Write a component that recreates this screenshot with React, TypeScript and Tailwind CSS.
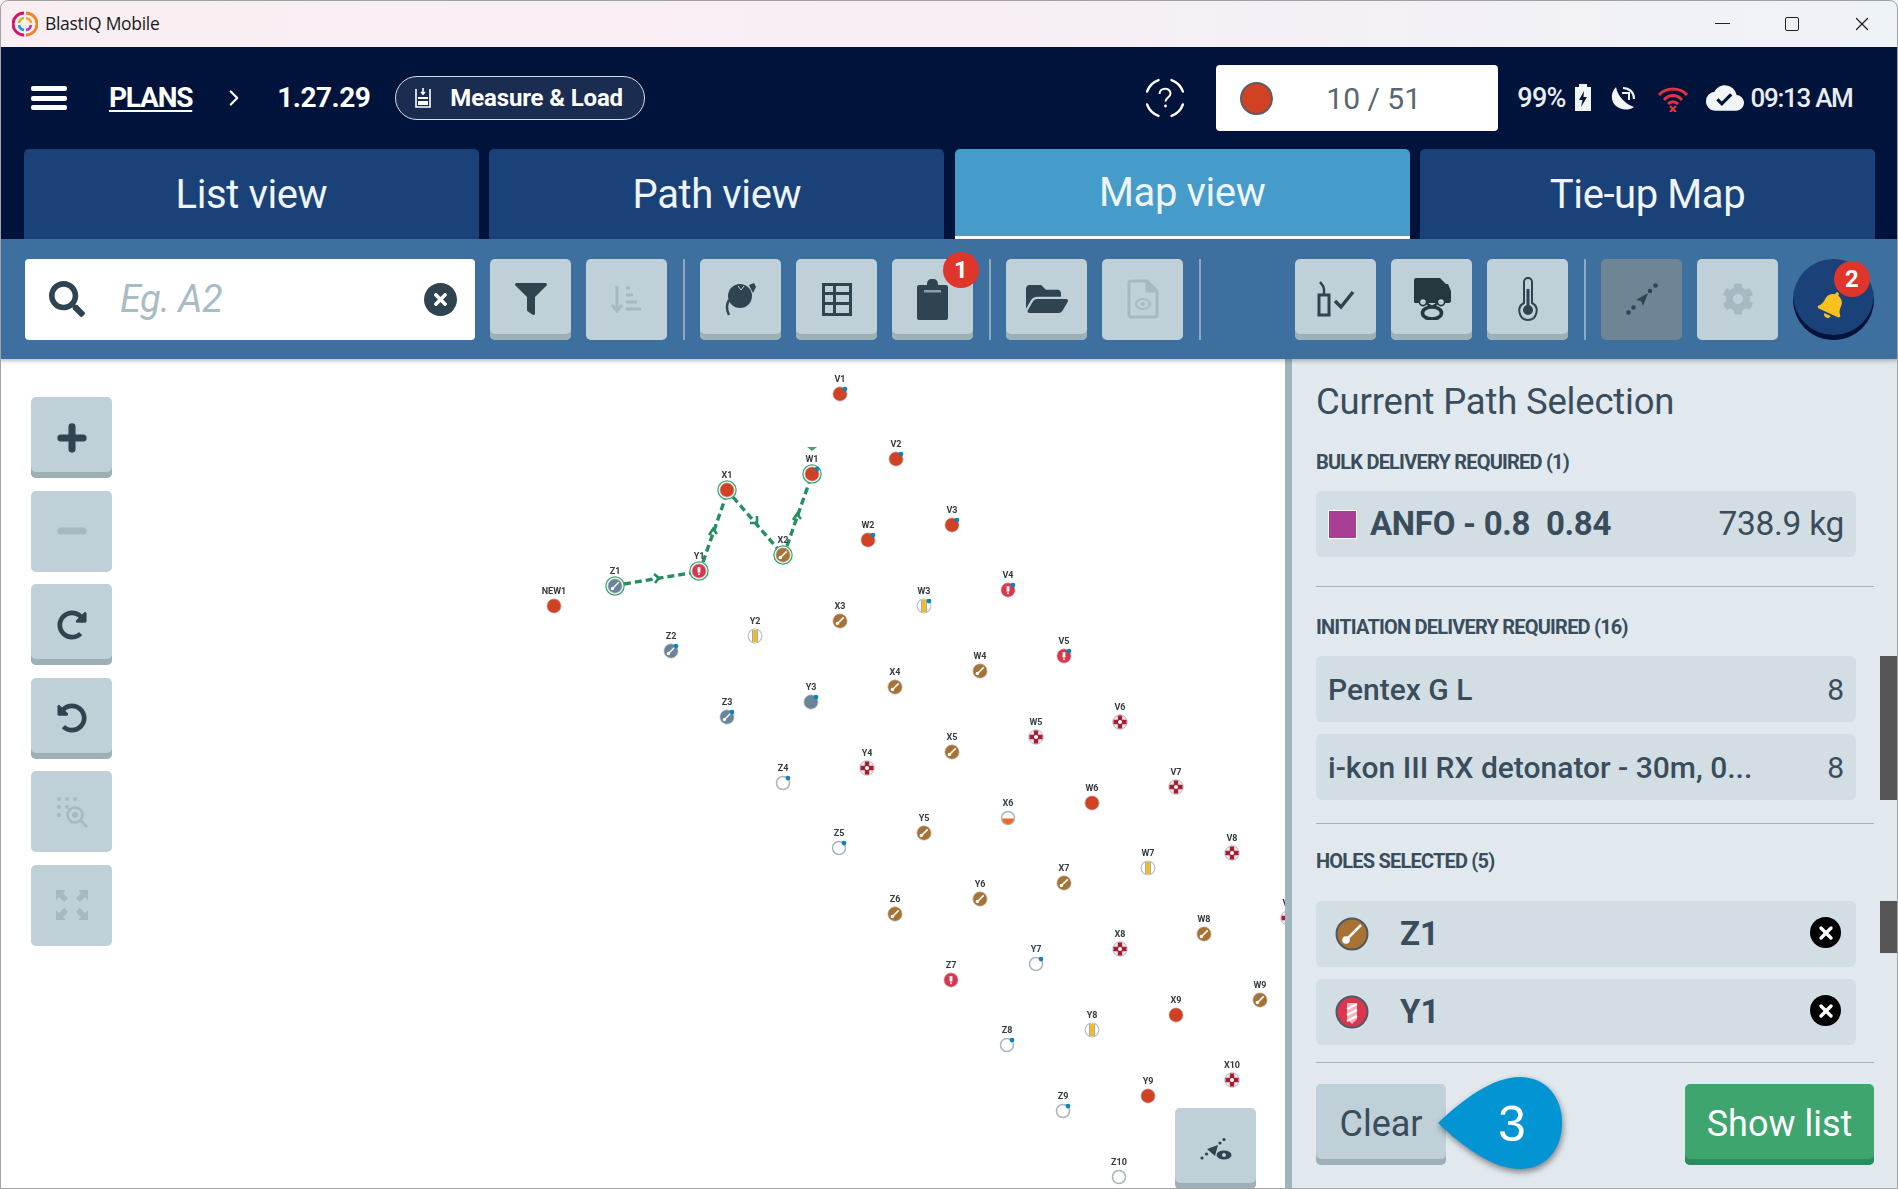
import { ChevronRight, Plus, Minus, X } from 'lucide-react';
import { FaSearch, FaFilter, FaFolderOpen, FaCog, FaBell, FaTimes, FaRedoAlt, FaUndoAlt } from 'react-icons/fa';
import { MdCloudDone } from 'react-icons/md';
import type { ReactNode } from 'react';

type HoleKind = 'red' | 'brown' | 'crimson' | 'slate' | 'slateTool' | 'stripe' | 'buoy' | 'ring' | 'half';

interface Hole {
  id: string;
  x: number;
  y: number;
  kind: HoleKind;
  dot?: boolean;
  sel?: boolean;
}

const holes: Hole[] = [
  { id: 'V1', x: 840, y: 394, kind: 'red', dot: true },
  { id: 'V2', x: 896, y: 459, kind: 'red', dot: true },
  { id: 'V3', x: 952, y: 525, kind: 'red', dot: true },
  { id: 'W1', x: 812, y: 474, kind: 'red', dot: true, sel: true },
  { id: 'X1', x: 727, y: 490, kind: 'red', sel: true },
  { id: 'W2', x: 868, y: 540, kind: 'red', dot: true },
  { id: 'X2', x: 783, y: 555, kind: 'brown', sel: true },
  { id: 'Y1', x: 699, y: 571, kind: 'crimson', sel: true },
  { id: 'Z1', x: 615, y: 586, kind: 'slateTool', sel: true },
  { id: 'NEW1', x: 554, y: 606, kind: 'red' },
  { id: 'V4', x: 1008, y: 590, kind: 'crimson', dot: true },
  { id: 'W3', x: 924, y: 606, kind: 'stripe', dot: true },
  { id: 'X3', x: 840, y: 621, kind: 'brown' },
  { id: 'Y2', x: 755, y: 636, kind: 'stripe' },
  { id: 'Z2', x: 671, y: 651, kind: 'slateTool', dot: true },
  { id: 'V5', x: 1064, y: 656, kind: 'crimson', dot: true },
  { id: 'W4', x: 980, y: 671, kind: 'brown' },
  { id: 'X4', x: 895, y: 687, kind: 'brown' },
  { id: 'Y3', x: 811, y: 702, kind: 'slate', dot: true },
  { id: 'Z3', x: 727, y: 717, kind: 'slateTool', dot: true },
  { id: 'V6', x: 1120, y: 722, kind: 'buoy' },
  { id: 'W5', x: 1036, y: 737, kind: 'buoy' },
  { id: 'X5', x: 952, y: 752, kind: 'brown' },
  { id: 'Y4', x: 867, y: 768, kind: 'buoy' },
  { id: 'Z4', x: 783, y: 783, kind: 'ring', dot: true },
  { id: 'V7', x: 1176, y: 787, kind: 'buoy' },
  { id: 'W6', x: 1092, y: 803, kind: 'red' },
  { id: 'X6', x: 1008, y: 818, kind: 'half' },
  { id: 'Y5', x: 924, y: 833, kind: 'brown' },
  { id: 'Z5', x: 839, y: 848, kind: 'ring', dot: true },
  { id: 'V8', x: 1232, y: 853, kind: 'buoy' },
  { id: 'W7', x: 1148, y: 868, kind: 'stripe' },
  { id: 'X7', x: 1064, y: 883, kind: 'brown' },
  { id: 'Y6', x: 980, y: 899, kind: 'brown' },
  { id: 'Z6', x: 895, y: 914, kind: 'brown' },
  { id: 'V9', x: 1288, y: 918, kind: 'buoy' },
  { id: 'W8', x: 1204, y: 934, kind: 'brown' },
  { id: 'X8', x: 1120, y: 949, kind: 'buoy' },
  { id: 'Y7', x: 1036, y: 964, kind: 'ring', dot: true },
  { id: 'Z7', x: 951, y: 980, kind: 'crimson' },
  { id: 'W9', x: 1260, y: 1000, kind: 'brown' },
  { id: 'X9', x: 1176, y: 1015, kind: 'red' },
  { id: 'Y8', x: 1092, y: 1030, kind: 'stripe' },
  { id: 'Z8', x: 1007, y: 1045, kind: 'ring', dot: true },
  { id: 'X10', x: 1232, y: 1080, kind: 'buoy' },
  { id: 'Y9', x: 1148, y: 1096, kind: 'red' },
  { id: 'Z9', x: 1063, y: 1111, kind: 'ring', dot: true },
  { id: 'Z10', x: 1119, y: 1177, kind: 'ring' },
];

const MAP_TOP = 359;

function HoleGlyph({ kind }: { kind: HoleKind }) {
  switch (kind) {
    case 'red':
      return <circle r="6.6" fill="#d14124" stroke="#c9c9c9" strokeWidth="0.6" />;
    case 'brown':
      return (
        <g>
          <circle r="6.6" fill="#a87233" stroke="#b8b8b8" strokeWidth="0.6" />
          <path d="M-2.5 2.5L3.4-3.4" stroke="#fff" strokeWidth="1.5" />
          <circle cx="-2.4" cy="2.4" r="1.6" fill="#fff" />
        </g>
      );
    case 'crimson':
      return (
        <g>
          <circle r="6.6" fill="#dc3550" stroke="#c9c9c9" strokeWidth="0.6" />
          <rect x="-1.3" y="-3.6" width="2.6" height="5" fill="#fff" />
          <rect x="-0.8" y="2.2" width="1.6" height="1.6" fill="#fff" />
        </g>
      );
    case 'slate':
      return <circle r="6.6" fill="#6a8599" stroke="#c9c9c9" strokeWidth="0.6" />;
    case 'slateTool':
      return (
        <g>
          <circle r="6.6" fill="#6a8599" stroke="#c9c9c9" strokeWidth="0.6" />
          <path d="M-2.5 2.5L3.4-3.4" stroke="#fff" strokeWidth="1.3" />
          <circle cx="-2.4" cy="2.4" r="1.5" fill="#fff" />
        </g>
      );
    case 'stripe':
      return (
        <g>
          <circle r="6.4" fill="#fff" stroke="#b4bcc2" strokeWidth="1" />
          <rect x="-1.6" y="-5.6" width="3.2" height="11.2" fill="#f2b90f" />
          <path d="M-2.2-5.4V5.4M2.2-5.4V5.4" stroke="#5b6670" strokeWidth="0.6" />
        </g>
      );
    case 'buoy':
      return (
        <g>
          <circle r="6.7" fill="#ece6e7" stroke="#bcbcbc" strokeWidth="0.9" />
          <path d="M0-6V6M-6 0H6" stroke="#a61c30" strokeWidth="4" />
          <circle r="1.9" fill="#fff" />
        </g>
      );
    case 'ring':
      return <circle r="6" fill="#fff" stroke="#a9b6bf" strokeWidth="1.4" />;
    case 'half':
      return (
        <g>
          <circle r="6" fill="#fff" stroke="#a9b6bf" strokeWidth="1.4" />
          <path d="M-5.4 0.4H5.4A5.4 5.4 0 0 1-5.4 0.4Z" fill="#ec6b24" />
        </g>
      );
  }
}

function HolePin({ hole }: { hole: Hole }) {
  return (
    <div className="absolute" style={{ left: hole.x, top: hole.y - MAP_TOP }}>
      <span className="absolute left-0 top-[-20px] -translate-x-1/2 text-[9px] leading-[10px] font-bold text-[#333b40] whitespace-nowrap">
        {hole.id}
      </span>
      <svg className="absolute left-[-13px] top-[-13px]" width="26" height="26" viewBox="-12 -12 24 24">
        <HoleGlyph kind={hole.kind} />
        {hole.sel && <circle r="8.4" fill="none" stroke="#3fa56f" strokeWidth="1.2" />}
        {hole.dot && <circle cx="4.6" cy="-4.6" r="2.2" fill="#0b83c0" />}
      </svg>
    </div>
  );
}

// the selected path drawn on the map, in window coordinates (viewBox is offset by MAP_TOP)
function PathOverlay() {
  const chevrons = ['M654 574l5 4-4 5', 'M709 535l4-6 4 5', 'M757 516v7h-7', 'M793 520l4-6 4 5'];
  return (
    <svg className="absolute inset-0" width="1285" height="830" viewBox="0 359 1285 830" fill="none">
      <path
        d="M624 584L690 573M703 562L725 499M733 497L777 548M787 546L809 483"
        stroke="#24905f"
        strokeWidth="3.4"
        strokeDasharray="7 4"
      />
      {chevrons.map((d) => (
        <path key={d} d={d} stroke="#24905f" strokeWidth="2.6" />
      ))}
      <path d="M807 447h10l-5 4z" fill="#3fa56f" />
    </svg>
  );
}

function ToolButton({ children, flat, className = '' }: { children: ReactNode; flat?: boolean; className?: string }) {
  return (
    <div
      className={`relative flex h-[81px] w-[81px] shrink-0 items-center justify-center rounded-[5px] bg-[#bfd0d9] ${
        flat ? '' : 'shadow-[inset_0_-6px_0_#9db0b8]'
      } ${className}`}
    >
      {children}
    </div>
  );
}

function Badge({ n, className }: { n: number; className: string }) {
  return (
    <span
      className={`absolute flex h-[36px] w-[36px] items-center justify-center rounded-full bg-[#e0352b] text-[24px] font-bold text-white ${className}`}
    >
      {n}
    </span>
  );
}

function Divider() {
  return <div className="mx-[15.5px] h-[81px] w-[2px] shrink-0 bg-[#8ea9c0]" />;
}

function SectionLabel({ children, className }: { children: ReactNode; className: string }) {
  return (
    <div className={`h-[24px] text-[20px] leading-[24px] font-bold tracking-[-0.8px] text-[#3a4d5c] ${className}`}>
      {children}
    </div>
  );
}

function CloseDot() {
  return (
    <span className="mt-[-3px] flex h-[31px] w-[31px] items-center justify-center rounded-full bg-black">
      <X size={20} strokeWidth={4} className="text-white" />
    </span>
  );
}

function Tab({ label, active }: { label: string; active?: boolean }) {
  return (
    <div
      className={`flex items-center justify-center rounded-t-[5px] text-[40px] tracking-[-0.4px] text-[#eef4f8] ${
        active ? 'border-b-[3px] border-white bg-[#459bc9]' : 'bg-[#1a4178] pt-[1px]'
      }`}
    >
      {label}
    </div>
  );
}

function AppLogo() {
  return (
    <svg width="26" height="26" viewBox="0 0 26 26" fill="none" strokeWidth="3">
      <path d="M12 2A11 11 0 0 0 12 24" stroke="#d6156a" />
      <path d="M14 2A11 11 0 0 1 14 24" stroke="#f5822a" />
      <path d="M7 12A6 6 0 0 1 12 7" stroke="#b9c41f" strokeWidth="2.6" />
      <path d="M14 7A6 6 0 0 1 19 12" stroke="#f7a823" strokeWidth="2.6" />
      <path d="M7 14A6 6 0 0 0 12 19" stroke="#1f9ad6" strokeWidth="2.6" />
      <path d="M14 19A6 6 0 0 0 19 14" stroke="#a83eb0" strokeWidth="2.6" />
    </svg>
  );
}

export default function App() {
  return (
    <div className="relative flex h-[1189px] w-[1898px] flex-col overflow-hidden bg-white font-[Roboto,sans-serif]">
      {/* Title bar */}
      <div className="flex h-[47px] shrink-0 items-center bg-gradient-to-r from-[#f9eff2] via-[#f8eef6] to-[#eef3f7] pl-[12px]">
        <AppLogo />
        <span className="ml-[7px] font-['Open_Sans',sans-serif] text-[17.5px] tracking-[-0.3px] text-[#1a1a1a]">BlastIQ Mobile</span>
        <div className="ml-auto flex items-center pr-[25px]">
          <div className="h-[1.5px] w-[15px] bg-[#222]" />
          <div className="ml-[55px] h-[14px] w-[14px] rounded-[2px] border-[1.5px] border-[#222]" />
          <X size={22} strokeWidth={1.3} className="ml-[52px] text-[#222]" />
        </div>
      </div>

      {/* Header */}
      <div className="h-[192px] shrink-0 bg-[#00133a]">
        <div className="flex h-[102px] items-center pl-[31px]">
          <div className="flex h-[24px] w-[36px] flex-col justify-between">
            <div className="h-[5px] rounded-[2px] bg-white" />
            <div className="h-[5px] rounded-[2px] bg-white" />
            <div className="h-[5px] rounded-[2px] bg-white" />
          </div>
          <span className="ml-[42px] text-[28px] font-bold tracking-[-1.2px] text-white underline underline-offset-[3px]">PLANS</span>
          <ChevronRight size={26} strokeWidth={2} className="ml-[29px] text-white" />
          <span className="ml-[30px] text-[28px] font-bold tracking-[-0.5px] text-white">1.27.29</span>
          <div className="ml-[25px] flex h-[44px] w-[250px] items-center rounded-full border-[1.5px] border-[#d5dde6] bg-[#1a2c50] pl-[15px]">
            <svg width="24" height="24" viewBox="0 0 24 24" fill="none" stroke="#fff" strokeWidth="1.6">
              <path d="M5 3V21H19V3" />
              <path d="M12 2V8M10 6l2 2 2-2" />
              <path d="M7 11H17V13H7ZM7 15H17V19H7Z" fill="#fff" stroke="none" />
            </svg>
            <span className="ml-[15px] text-[24px] font-bold tracking-[-0.15px] text-white">Measure &amp; Load</span>
          </div>
          <svg className="ml-[499px]" width="42" height="42" viewBox="0 0 42 42" fill="none" stroke="#fff" strokeWidth="2.4" strokeLinecap="round">
            <path d="M3.1 14.5A19 19 0 0 1 14.5 3.1M27.5 3.1A19 19 0 0 1 38.9 14.5M38.9 27.5A19 19 0 0 1 27.5 38.9M14.5 38.9A19 19 0 0 1 3.1 27.5" />
            <path d="M15.5 17c0-7 11-7 11-.5 0 4-5 4-5 8" strokeWidth="2" strokeLinecap="butt" />
            <circle cx="21.5" cy="29" r="1.4" fill="#fff" stroke="none" />
          </svg>
          <div className="ml-[30px] flex h-[66px] w-[282px] items-center rounded-[4px] bg-white pl-[24px]">
            <span className="h-[33px] w-[33px] rounded-full border-2 border-[#5a5f63] bg-[#d14124]" />
            <span className="ml-[53px] text-[30px] text-[#586772]">10 / 51</span>
          </div>
          <span className="ml-[19px] text-[27px] font-medium tracking-[-0.8px] text-[#e8edf2]">99%</span>
          <svg className="ml-[8px]" width="18" height="28" viewBox="0 0 18 28">
            <path d="M5 0H13V3H17V27H1V3H5Z" fill="#f2f5f7" />
            <path d="M10 7L5 16H8.5L7 23 13 13H9.5Z" fill="#00133a" />
          </svg>
          <svg className="ml-[18px]" width="26" height="26" viewBox="0 0 26 26" fill="none">
            <path d="M6 2C0 8 1 17 6 21c5 4 12 5 18 1-3-1-7-3-11-7S7 7 6 2Z" fill="#f2f5f7" />
            <path d="M13 3c6 0 11 4 11 11" stroke="#f2f5f7" strokeWidth="2.2" />
            <path d="M12 8h7v7" stroke="#f2f5f7" strokeWidth="2" />
          </svg>
          <svg className="ml-[21px]" width="32" height="28" viewBox="0 0 32 28" fill="none" stroke="#e0333f" strokeWidth="3">
            <path d="M2 11C9 3 23 3 30 11" />
            <path d="M7 16C12 10 20 10 25 16" />
            <path d="M11 20C14 17 18 17 21 20" />
            <path d="M13 22L19 28M19 22L13 28" strokeWidth="2.4" />
          </svg>
          <MdCloudDone size={38} className="ml-[17px] text-[#f2f5f7]" />
          <span className="ml-[7px] text-[26px] font-medium tracking-[-1.3px] text-[#e8edf2]">09:13 AM</span>
        </div>
        <div className="grid h-[90px] grid-cols-4 gap-[10.5px] pl-[24px] pr-[23px]">
          <Tab label="List view" />
          <Tab label="Path view" />
          <Tab label="Map view" active />
          <Tab label="Tie-up Map" />
        </div>
      </div>

      {/* Toolbar */}
      <div className="z-10 flex h-[120px] shrink-0 items-center bg-[#3d6f9f] pl-[25px] shadow-[0_2px_4px_rgba(0,0,0,0.25)]">
        <div className="mr-[15px] flex h-[81px] w-[450px] items-center rounded-[4px] bg-white pl-[24px] pr-[18px]">
          <FaSearch size={36} className="text-[#2f4450]" />
          <span className="ml-[35px] text-[38px] italic tracking-[-0.5px] text-[#a8bcc6]">Eg. A2</span>
          <span className="ml-auto flex h-[33px] w-[33px] items-center justify-center rounded-full bg-[#2f4450]">
            <FaTimes size={19} className="text-white" />
          </span>
        </div>
        <ToolButton className="mr-[15px]">
          <FaFilter size={32} className="text-[#2f4450]" />
        </ToolButton>
        <ToolButton flat>
          <svg width="32" height="28" viewBox="0 0 32 28" fill="none" stroke="#a6b9c3" strokeWidth="3">
            <path d="M6 1V25M1 20l5 6 5-6" />
            <path d="M15 3h4M15 10h7M15 17h11M15 24h15" />
          </svg>
        </ToolButton>
        <Divider />
        <ToolButton className="mr-[15px]">
          <svg width="32" height="34" viewBox="0 0 32 34" fill="#2f4450">
            <circle cx="15" cy="14" r="12" />
            <path d="M24 3l5-2 2 4-3 6z" />
            <path d="M4 18C1 23 1 27 4 33" fill="none" stroke="#2f4450" strokeWidth="2.5" />
            <path d="M13 4l3 4 3-4" fill="none" stroke="#bfd0d9" strokeWidth="1" />
          </svg>
        </ToolButton>
        <ToolButton className="mr-[15px]">
          <svg width="30" height="33" viewBox="0 0 30 33" fill="#2f4450">
            <path d="M0 0H30V33H0Z" />
            <path d="M3 3H11V9H3ZM14 3H27V9H14ZM3 12H11V19H3ZM14 12H27V19H14ZM3 22H11V30H3ZM14 22H27V30H14Z" fill="#bfd0d9" />
          </svg>
        </ToolButton>
        <ToolButton>
          <svg width="31" height="41" viewBox="0 0 31 41" fill="#2f4450">
            <path d="M2 6H10C10 1 12 0 15.5 0S21 1 21 6H29C30 6 31 7 31 8V39C31 40 30 41 29 41H2C1 41 0 40 0 39V8C0 7 1 6 2 6Z" />
            <rect x="7" y="11" width="17" height="2.5" fill="#8ba0ac" />
          </svg>
          <Badge n={1} className="right-[-6px] top-[-7px]" />
        </ToolButton>
        <Divider />
        <ToolButton className="mr-[15px]">
          <FaFolderOpen size={42} className="text-[#2f4450]" />
        </ToolButton>
        <ToolButton flat>
          <svg width="32" height="40" viewBox="0 0 32 40" fill="none" stroke="#a6b9c3" strokeWidth="3">
            <path d="M3 2H20L30 12V36C30 37 29 38 28 38H4C3 38 2 37 2 36V3Z" />
            <path d="M20 2V12H30" fill="#a6b9c3" />
            <ellipse cx="16" cy="25" rx="7" ry="5" strokeWidth="2" />
            <circle cx="16" cy="25" r="2" fill="#a6b9c3" stroke="none" />
          </svg>
        </ToolButton>
        <Divider />
        <ToolButton className="ml-[79px] mr-[15px]">
          <svg width="38" height="36" viewBox="0 0 38 36" fill="none" stroke="#2f4450" strokeWidth="3">
            <path d="M2 14H12V34H2Z" />
            <path d="M7 14V8C7 5 5 4 3 1" strokeWidth="2.4" />
            <path d="M18 20L24 26 36 11" strokeWidth="3.5" />
          </svg>
        </ToolButton>
        <ToolButton className="mr-[15px]">
          <svg width="38" height="42" viewBox="0 0 38 42" fill="#253840">
            <path d="M1 2C1 1 2 0 3 0H27L33 6H35L38 13V23C38 24 37 25 36 25H2C1 25 1 24 1 23Z" />
            <circle cx="10" cy="24" r="3.6" stroke="#253840" strokeWidth="1.6" fill="#bfd0d9" />
            <circle cx="28" cy="24" r="3.6" stroke="#253840" strokeWidth="1.6" fill="#bfd0d9" />
            <path d="M13 25L19 29 25 25" fill="none" stroke="#253840" strokeWidth="2.4" />
            <ellipse cx="19" cy="35" rx="9.5" ry="6" fill="none" stroke="#253840" strokeWidth="3.6" />
          </svg>
        </ToolButton>
        <ToolButton>
          <svg width="22" height="44" viewBox="0 0 22 44" fill="none" stroke="#2f4450" strokeWidth="2">
            <path d="M7 26V5C7 -0.5 15 -0.5 15 5V26C23 30 20 43 11 43S-1 30 7 26Z" />
            <circle cx="11" cy="33" r="5" fill="#2f4450" stroke="none" />
            <path d="M11 12V30" strokeWidth="3" />
          </svg>
        </ToolButton>
        <Divider />
        <ToolButton flat className="mr-[15px] !bg-[#6d8595]">
          <svg width="32" height="32" viewBox="0 0 32 32" fill="#2f4450">
            <circle cx="2.5" cy="29.5" r="2.2" />
            <circle cx="7.5" cy="24.5" r="2.2" />
            <circle cx="24" cy="8" r="2.2" />
            <circle cx="29.5" cy="2.5" r="2.2" />
            <path d="M10 17L22 10 17 23 15 18Z" />
          </svg>
        </ToolButton>
        <ToolButton flat className="mr-[15px]">
          <FaCog size={32} className="text-[#a6b9c3]" />
        </ToolButton>
        <div className="relative flex h-[81px] w-[81px] shrink-0 items-center justify-center rounded-full bg-[#1a4178] shadow-[inset_0_-5px_0_#00133a]">
          <FaBell size={28} className="ml-[-3px] mt-[12px] rotate-[25deg] text-[#f9c01e]" />
          <Badge n={2} className="right-[4px] top-[2px]" />
        </div>
      </div>

      {/* Body */}
      <div className="flex min-h-0 flex-1">
        <div className="relative min-w-0 flex-1 overflow-hidden bg-white">
          <div className="absolute inset-0 blur-[0.4px]">
            <PathOverlay />
            {holes.map((h) => (
              <HolePin key={h.id} hole={h} />
            ))}
          </div>

          <div className="absolute left-[31px] top-[38px] flex flex-col gap-[12.6px]">
            <ToolButton>
              <Plus size={38} strokeWidth={4.5} className="text-[#2f4450]" />
            </ToolButton>
            <ToolButton flat>
              <Minus size={38} strokeWidth={4.5} className="text-[#a6b9c3]" />
            </ToolButton>
            <ToolButton>
              <FaRedoAlt size={30} className="text-[#2f4450]" />
            </ToolButton>
            <ToolButton>
              <FaUndoAlt size={30} className="text-[#2f4450]" />
            </ToolButton>
            <ToolButton flat>
              <svg width="32" height="32" viewBox="0 0 32 32" fill="#a6b9c3">
                <circle cx="3" cy="3" r="2" />
                <circle cx="11" cy="3" r="2" />
                <circle cx="19" cy="3" r="2" />
                <circle cx="3" cy="11" r="2" />
                <circle cx="11" cy="11" r="2" />
                <circle cx="3" cy="19" r="2" />
                <circle cx="19" cy="19" r="7.5" fill="none" stroke="#a6b9c3" strokeWidth="2.5" />
                <circle cx="19" cy="19" r="3" />
                <path d="M25 25L31 31" stroke="#a6b9c3" strokeWidth="2.5" />
              </svg>
            </ToolButton>
            <ToolButton flat>
              <svg width="32" height="30" viewBox="0 0 32 30" fill="#a6b9c3">
                <path d="M0 0H10L7 3 12 8 8 12 3 7 0 10ZM32 0V10L29 7 24 12 20 8 25 3 22 0ZM0 30V20L3 23 8 18 12 22 7 27 10 30ZM32 30H22L25 27 20 22 24 18 29 23 32 20Z" />
              </svg>
            </ToolButton>
          </div>

          <ToolButton className="absolute left-[1175px] top-[749px]">
            <svg width="32" height="24" viewBox="0 0 32 24" fill="#2f4450">
              <circle cx="2" cy="21" r="1.6" />
              <circle cx="6.5" cy="17" r="1.6" />
              <circle cx="20" cy="6" r="1.6" />
              <circle cx="24" cy="2.5" r="1.6" />
              <path d="M7 12L18 8 15 19Z" />
              <ellipse cx="24" cy="18" rx="7.5" ry="4.5" />
              <circle cx="24" cy="18" r="2" fill="#bfd0d9" />
            </svg>
          </ToolButton>
        </div>

        {/* Path selection panel */}
        <aside className="relative w-[613px] shrink-0 border-l-[7px] border-[#9fb5bd] bg-[#e1e9ef] pl-[24px] text-[#3a4d5c]">
          <h2 className="mt-[21px] h-[44px] text-[36.5px] leading-[44px] tracking-[-0.2px]">Current Path Selection</h2>

          <SectionLabel className="mt-[26px]">BULK DELIVERY REQUIRED (1)</SectionLabel>
          <div className="mt-[17px] flex h-[66px] w-[540px] items-center rounded-[6px] bg-[#d3dee4] pl-[12px] pr-[12px]">
            <span className="h-[29px] w-[29px] border border-white bg-[#a83e96]" />
            <span className="ml-[13px] text-[33px] font-bold tracking-[-0.3px]">ANFO - 0.8&nbsp; 0.84</span>
            <span className="ml-auto text-[33.5px] tracking-[-0.3px]">738.9 kg</span>
          </div>
          <div className="mt-[29px] h-px w-[558px] bg-[#9fb5bd]" />

          <SectionLabel className="mt-[28px]">INITIATION DELIVERY REQUIRED (16)</SectionLabel>
          <div className="mt-[17px] flex h-[66px] w-[540px] items-center justify-between rounded-[6px] bg-[#d3dee4] px-[12px] text-[30px]">
            <span className="font-medium">Pentex G L</span>
            <span>8</span>
          </div>
          <div className="mt-[12px] flex h-[66px] w-[540px] items-center justify-between rounded-[6px] bg-[#d3dee4] px-[12px] text-[30px]">
            <span className="font-medium">i-kon III RX detonator - 30m, 0...</span>
            <span>8</span>
          </div>
          <div className="mt-[23px] h-px w-[558px] bg-[#9fb5bd]" />

          <SectionLabel className="mt-[25px]">HOLES SELECTED (5)</SectionLabel>
          <div className="mt-[28px] flex h-[66px] w-[540px] items-center rounded-[6px] bg-[#d3dee4] pl-[19px] pr-[15px]">
            <svg width="34" height="34" viewBox="0 0 34 34">
              <circle cx="17" cy="17" r="15.5" fill="#a87233" stroke="#4b5a63" strokeWidth="2" />
              <path d="M12 22L26 8" stroke="#fff" strokeWidth="2.5" />
              <circle cx="11" cy="23" r="3.8" fill="#fff" />
            </svg>
            <span className="ml-[31px] text-[33px] font-bold">Z1</span>
            <span className="ml-auto">
              <CloseDot />
            </span>
          </div>
          <div className="mt-[12px] flex h-[66px] w-[540px] items-center rounded-[6px] bg-[#d3dee4] pl-[19px] pr-[15px]">
            <svg width="34" height="34" viewBox="0 0 34 34">
              <circle cx="17" cy="17" r="15.5" fill="#dc3550" stroke="#4b5a63" strokeWidth="2" />
              <path d="M12 8H22V24L17 29 12 24Z" fill="#f3b4be" />
              <path d="M12 14L22 9M12 20L22 15M12 26L22 21" stroke="#fff" strokeWidth="2.2" />
            </svg>
            <span className="ml-[31px] text-[33px] font-bold">Y1</span>
            <span className="ml-auto">
              <CloseDot />
            </span>
          </div>
          <div className="mt-[17px] h-px w-[558px] bg-[#9fb5bd]" />

          <div className="mt-[21px] flex w-[558px] justify-between">
            <div className="flex h-[81px] w-[130px] items-center justify-center rounded-[5px] bg-[#bfd0d9] pb-[2px] text-[36px] shadow-[inset_0_-6px_0_#9db0b8]">
              Clear
            </div>
            <div className="flex h-[81px] w-[189px] items-center justify-center rounded-[5px] bg-[#3fa56f] pb-[2px] text-[36px] text-white shadow-[inset_0_-6px_0_#2d8a5c]">
              Show list
            </div>
          </div>

          {/* Scrollbar thumbs */}
          <div className="absolute right-0 top-[297px] h-[144px] w-[18px] bg-[#555]" />
          <div className="absolute right-0 top-[542px] h-[52px] w-[18px] bg-[#555]" />

          {/* Callout */}
          <div className="absolute left-[146px] top-[718px] h-[92px] w-[124px] drop-shadow-[1px_3px_3px_rgba(0,0,0,0.45)]">
            <svg width="124" height="92" viewBox="0 0 124 92">
              <path d="M0 46C25 22 55 0 82 0 108 0 124 20 124 46S108 92 82 92C55 92 25 70 0 46Z" fill="#0395d3" />
            </svg>
            <span className="absolute left-[60px] top-[17px] font-['Liberation_Sans',sans-serif] text-[50px] leading-[60px] text-white">3</span>
          </div>
        </aside>
      </div>

      {/* Window frame */}
      <div className="pointer-events-none absolute inset-0 z-20 rounded-t-[8px] border border-[#a3a3a3]" />
    </div>
  );
}
